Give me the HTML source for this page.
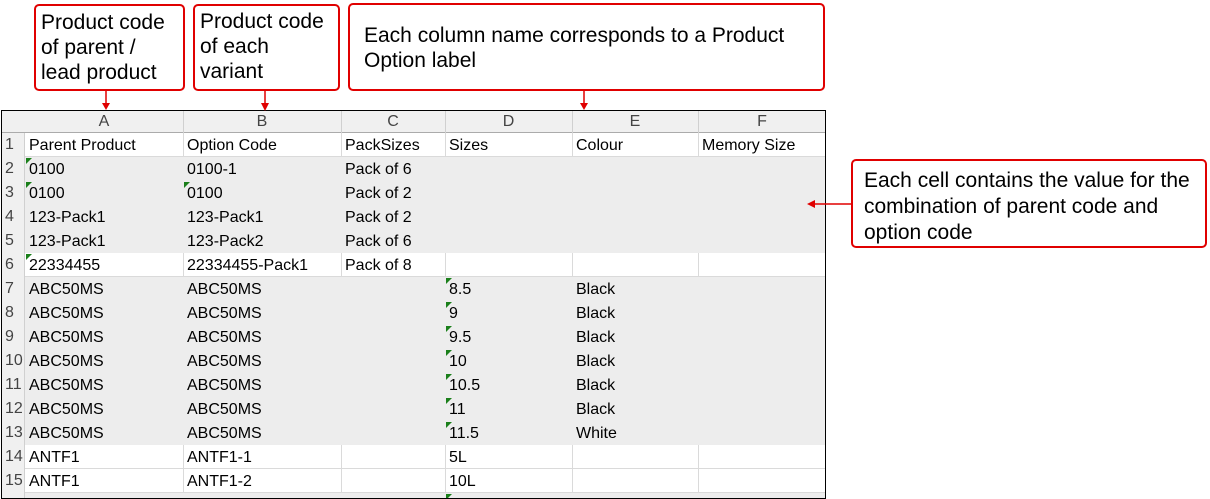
<!DOCTYPE html>
<html><head><meta charset="utf-8"><style>
*{margin:0;padding:0;box-sizing:border-box}
body{width:1210px;height:499px;background:#fff;position:relative;overflow:hidden;font-family:"Liberation Sans",Arial,sans-serif}
.box{position:absolute;border:2px solid #e00000;border-radius:5px;font-size:21px;line-height:25px;color:#000;padding:4px 0 0 5px;background:#fff}
.tbl{position:absolute;left:1px;top:110px;width:825px;height:389px;border:1.5px solid #000;overflow:hidden;background:#fff}
.c{position:absolute;font-size:16px;color:#000;white-space:nowrap;line-height:24px;padding-left:4px}
.h{position:absolute;font-size:16px;color:#444;text-align:center;line-height:22px}
.g{position:absolute;background:#ededed}
.vl{position:absolute;width:1px;background:#dadada}
.hl{position:absolute;height:1px;background:#dadada}
.tri{position:absolute;width:0;height:0;border-top:6px solid #1a7f1a;border-right:6px solid transparent}
</style></head><body>
<div class="box" style="left:34px;top:4px;width:151px;height:87px">Product code<br>of parent /<br>lead product</div>
<div class="box" style="left:193px;top:4px;width:147px;height:87px;padding-top:3px">Product code<br>of each<br>variant</div>
<div class="box" style="left:348px;top:3px;width:477px;height:88px;padding:18px 0 0 14px;line-height:25px">Each column name corresponds to a Product<br>Option label</div>
<div class="box" style="left:851px;top:159px;width:356px;height:89px;padding:7px 0 0 11px;line-height:26px">Each cell contains the value for the<br>combination of parent code and<br>option code</div>
<div class="tbl">
<div style="position:absolute;left:0;top:0;width:825px;height:22px;background:#f0f0f0;border-bottom:1px solid #ababab"></div>
<div style="position:absolute;left:0;top:22px;width:23px;height:370px;background:#f0f0f0;border-right:1px solid #d0d0d0"></div>
<div class="g" style="left:23px;top:46px;width:802px;height:96px"></div>
<div class="g" style="left:23px;top:166px;width:802px;height:168px"></div>
<div class="g" style="left:23px;top:382px;width:802px;height:10px"></div>
<div class="hl" style="left:23px;top:45px;width:802px"></div>
<div class="hl" style="left:23px;top:165px;width:802px"></div>
<div class="hl" style="left:23px;top:357px;width:802px"></div>
<div class="hl" style="left:23px;top:381px;width:802px"></div>
<div class="vl" style="left:181px;top:22px;height:24px"></div><div class="vl" style="left:339px;top:22px;height:24px"></div><div class="vl" style="left:443px;top:22px;height:24px"></div><div class="vl" style="left:570px;top:22px;height:24px"></div><div class="vl" style="left:696px;top:22px;height:24px"></div>
<div class="vl" style="left:181px;top:142px;height:24px"></div><div class="vl" style="left:339px;top:142px;height:24px"></div><div class="vl" style="left:443px;top:142px;height:24px"></div><div class="vl" style="left:570px;top:142px;height:24px"></div><div class="vl" style="left:696px;top:142px;height:24px"></div>
<div class="vl" style="left:181px;top:334px;height:48px"></div><div class="vl" style="left:339px;top:334px;height:48px"></div><div class="vl" style="left:443px;top:334px;height:48px"></div><div class="vl" style="left:570px;top:334px;height:48px"></div><div class="vl" style="left:696px;top:334px;height:48px"></div>
<div class="vl" style="left:181px;top:0;height:22px;background:#d0d0d0"></div><div class="vl" style="left:339px;top:0;height:22px;background:#d0d0d0"></div><div class="vl" style="left:443px;top:0;height:22px;background:#d0d0d0"></div><div class="vl" style="left:570px;top:0;height:22px;background:#d0d0d0"></div><div class="vl" style="left:696px;top:0;height:22px;background:#d0d0d0"></div>
<div class="h" style="left:23px;top:0;width:158px">A</div><div class="h" style="left:181px;top:0;width:158px">B</div><div class="h" style="left:339px;top:0;width:104px">C</div><div class="h" style="left:443px;top:0;width:127px">D</div><div class="h" style="left:570px;top:0;width:126px">E</div><div class="h" style="left:696px;top:0;width:128px">F</div>
<div id="rows"></div>
</div>
<svg style="position:absolute;left:0;top:0" width="1210" height="499">
<g stroke="#e00000" stroke-width="1.5" fill="#e00000">
<line x1="106" y1="91" x2="106" y2="106"/><path d="M102,103 L106,110 L110,103Z" stroke="none"/>
<line x1="265" y1="91" x2="265" y2="106"/><path d="M261,103 L265,111 L269,103Z" stroke="none"/>
<line x1="584" y1="91" x2="584" y2="106"/><path d="M580,103 L584,110 L588,103Z" stroke="none"/>
<line x1="851" y1="204" x2="812" y2="204"/><path d="M815,200 L807,204 L815,208Z" stroke="none"/>
</g></svg>
<script>
var d=[["Parent Product","Option Code","PackSizes","Sizes","Colour","Memory Size"],["0100","0100-1","Pack of 6"],["0100","0100","Pack of 2"],["123-Pack1","123-Pack1","Pack of 2"],["123-Pack1","123-Pack2","Pack of 6"],["22334455","22334455-Pack1","Pack of 8"],["ABC50MS","ABC50MS","","8.5","Black"],["ABC50MS","ABC50MS","","9","Black"],["ABC50MS","ABC50MS","","9.5","Black"],["ABC50MS","ABC50MS","","10","Black"],["ABC50MS","ABC50MS","","10.5","Black"],["ABC50MS","ABC50MS","","11","Black"],["ABC50MS","ABC50MS","","11.5","White"],["ANTF1","ANTF1-1","","5L"],["ANTF1","ANTF1-2","","10L"]];
var xs=[23,181,339,443,570,696],h="";
var tri=[[1,0],[2,0],[2,1],[5,0],[6,3],[7,3],[8,3],[9,3],[10,3],[11,3],[12,3],[15,3]];
for(var r=0;r<d.length;r++){var t=22+r*24;h+='<div class="c" style="left:0;top:'+t+'px;color:#444;padding-left:3px">'+(r+1)+'</div>';
for(var c=0;c<d[r].length;c++)if(d[r][c])h+='<div class="c" style="left:'+xs[c]+'px;top:'+(t+1)+'px">'+d[r][c]+'</div>';}
tri.forEach(function(p){h+='<div class="tri" style="left:'+(xs[p[1]]+1)+'px;top:'+(22+p[0]*24+1)+'px"></div>'});
document.getElementById("rows").innerHTML=h;
</script>
</body></html>
